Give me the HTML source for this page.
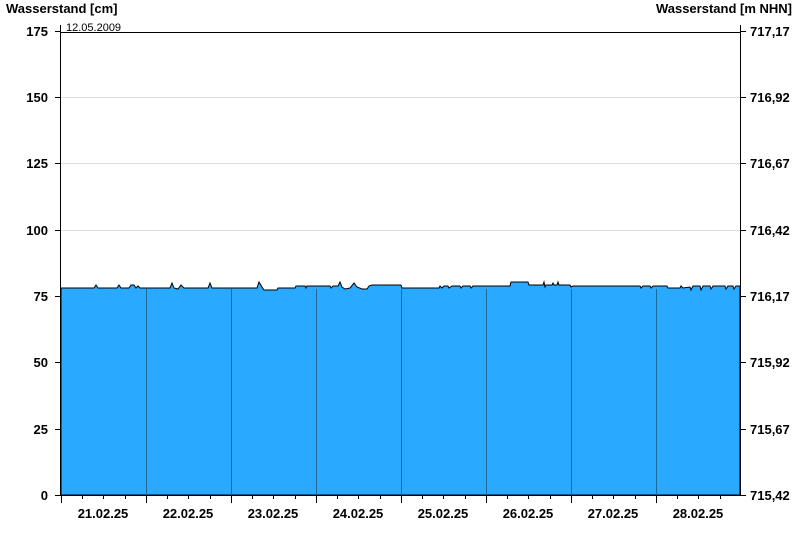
<!DOCTYPE html>
<html><head><meta charset="utf-8"><style>
body{margin:0;background:#fff;width:800px;height:550px;overflow:hidden}
text{font-family:"Liberation Sans",Arial,sans-serif;font-size:13px;font-weight:bold;fill:#000}
</style></head><body>
<svg width="800" height="550" xmlns="http://www.w3.org/2000/svg">
<text x="6" y="13">Wasserstand [cm]</text>
<text x="792" y="13" text-anchor="end">Wasserstand [m NHN]</text>
<g stroke="#ddd" stroke-width="1">
<line x1="61" y1="97.5" x2="740" y2="97.5"/><line x1="61" y1="163.5" x2="740" y2="163.5"/>
<line x1="61" y1="230.5" x2="740" y2="230.5"/>
</g>
<line x1="61" y1="32.5" x2="740" y2="32.5" stroke="#000"/>
<text x="66" y="31" style="font-weight:normal;font-size:11px">12.05.2009</text>
<path fill="#29a9ff" stroke="#000" stroke-width="1" d="M61,288 L94,288 L96,285 L98,288 L117,288 L119,285 L121,288 L129,288 L131,285 L134,285 L136,288 L138,286 L140,288 L170,288 L172,283 L174,288 L178,289 L181,285 L184,288 L208,288 L210,283 L212,288 L257,288 L259,282 L262,287 L264,290 L277,290 L278,288 L295,288 L296,286 L305,286 L306,288 L307,286 L330,286 L331,288 L333,286 L338,286 L340,282 L342,287 L345,289 L350,288 L354,283 L357,287 L362,289 L367,289 L369,286 L372,285 L386,285 L387,285 L401,285 L402,288 L439,288 L440,286 L442,288 L444,286 L448,286 L449,288 L452,286 L460,286 L461,288 L463,286 L470,286 L471,288 L473,286 L500,286 L510,286 L511,282 L528,282 L529,285 L543,285 L544,282 L545,287 L546,285 L552,285 L553,283 L554,285 L557,285 L558,282 L559,285 L570,285 L571,287 L573,286 L640,286 L641,288 L643,286 L650,286 L651,288 L653,286 L667,286 L668,288 L680,288 L681,286 L683,288 L690,287 L691,290 L693,286 L700,286 L701,290 L703,286 L710,286 L711,289 L713,286 L725,286 L726,289 L728,286 L733,286 L734,289 L736,286 L740,286 L740,495 L61,495 Z"/>
<g stroke="#1a6a9a" stroke-width="1">
<line x1="146.5" y1="289" x2="146.5" y2="495"/><line x1="231.5" y1="289" x2="231.5" y2="495"/>
<line x1="316.5" y1="289" x2="316.5" y2="495"/><line x1="401.5" y1="289" x2="401.5" y2="495"/>
<line x1="486.5" y1="289" x2="486.5" y2="495"/><line x1="571.5" y1="289" x2="571.5" y2="495"/>
<line x1="656.5" y1="289" x2="656.5" y2="495"/>
</g>
<g stroke="#000" stroke-width="1">
<line x1="60.5" y1="25" x2="60.5" y2="495"/>
<line x1="740.5" y1="25" x2="740.5" y2="495"/>
<line x1="55" y1="495.5" x2="741" y2="495.5"/>
<line x1="55" y1="31.5" x2="61" y2="31.5"/><line x1="55" y1="97.5" x2="61" y2="97.5"/>
<line x1="55" y1="163.5" x2="61" y2="163.5"/><line x1="55" y1="230.5" x2="61" y2="230.5"/>
<line x1="55" y1="296.5" x2="61" y2="296.5"/><line x1="55" y1="362.5" x2="61" y2="362.5"/>
<line x1="55" y1="429.5" x2="61" y2="429.5"/>
<line x1="740" y1="31.5" x2="746" y2="31.5"/><line x1="740" y1="97.5" x2="746" y2="97.5"/>
<line x1="740" y1="163.5" x2="746" y2="163.5"/><line x1="740" y1="230.5" x2="746" y2="230.5"/>
<line x1="740" y1="296.5" x2="746" y2="296.5"/><line x1="740" y1="362.5" x2="746" y2="362.5"/>
<line x1="740" y1="429.5" x2="746" y2="429.5"/><line x1="740" y1="495.5" x2="746" y2="495.5"/>
</g>
<g stroke="#000" stroke-width="1">
<path d="M61.5,495V503M146.5,495V503M231.5,495V503M316.5,495V503M401.5,495V503M486.5,495V503M571.5,495V503M656.5,495V503
M82.5,495V499M103.5,495V499M125.5,495V499M167.5,495V499M188.5,495V499M210.5,495V499M252.5,495V499M273.5,495V499M295.5,495V499
M337.5,495V499M358.5,495V499M380.5,495V499M422.5,495V499M443.5,495V499M465.5,495V499M507.5,495V499M528.5,495V499M550.5,495V499
M592.5,495V499M613.5,495V499M635.5,495V499M677.5,495V499M698.5,495V499M720.5,495V499"/>
</g>
<g text-anchor="end">
<text x="48" y="36">175</text><text x="48" y="102">150</text><text x="48" y="168">125</text>
<text x="48" y="235">100</text><text x="48" y="301">75</text><text x="48" y="367">50</text>
<text x="48" y="434">25</text><text x="48" y="500">0</text>
</g>
<g>
<text x="750" y="36">717,17</text><text x="750" y="102">716,92</text><text x="750" y="168">716,67</text>
<text x="750" y="235">716,42</text><text x="750" y="301">716,17</text><text x="750" y="367">715,92</text>
<text x="750" y="434">715,67</text><text x="750" y="500">715,42</text>
</g>
<g text-anchor="middle">
<text x="103" y="518">21.02.25</text><text x="188" y="518">22.02.25</text><text x="273" y="518">23.02.25</text>
<text x="358" y="518">24.02.25</text><text x="443" y="518">25.02.25</text><text x="528" y="518">26.02.25</text>
<text x="613" y="518">27.02.25</text><text x="698" y="518">28.02.25</text>
</g>
</svg>
</body></html>
